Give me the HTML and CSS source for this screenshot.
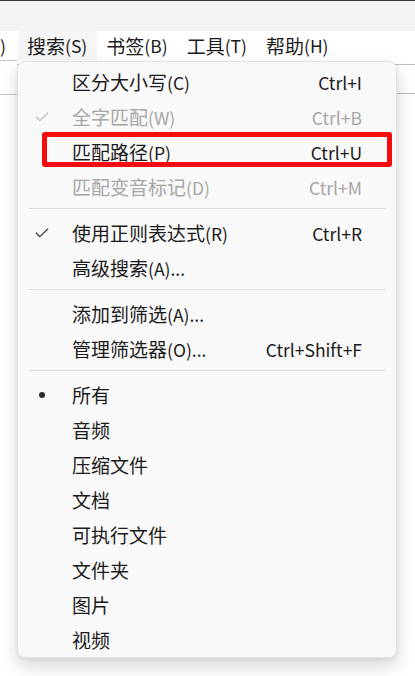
FILE: index.html
```html
<!DOCTYPE html>
<html lang="zh-CN">
<head>
<meta charset="utf-8">
<title>搜索菜单</title>
<link rel="stylesheet" href="styles.css">
</head>
<body>
<div class="window">
  <div class="titlebar"></div>
  <div class="menubar">
    <span class="mb-cut"><span class="k">)</span></span>
    <span class="mb-item active">搜索<span class="k">(S)</span></span>
    <span class="mb-item">书签<span class="k">(B)</span></span>
    <span class="mb-item">工具<span class="k">(T)</span></span>
    <span class="mb-item">帮助<span class="k">(H)</span></span>
  </div>
  <div class="toolbar">
    <div class="tb-left"></div>
    <div class="tb-right"></div>
  </div>
  <div class="content"></div>

  <div class="menu">
    <div class="mi"><span class="ic"></span><span class="lb">区分大小写<span class="k">(C)</span></span><span class="sc">Ctrl+I</span></div>
    <div class="mi disabled"><span class="ic"><svg width="14" height="10" viewBox="0 0 14 10"><path d="M1 4.8 L4.8 8.6 L13 0.8" fill="none" stroke="currentColor" stroke-width="1.3"/></svg></span><span class="lb">全字匹配<span class="k">(W)</span></span><span class="sc">Ctrl+B</span></div>
    <div class="mi"><span class="ic"></span><span class="lb">匹配路径<span class="k">(P)</span></span><span class="sc">Ctrl+U</span></div>
    <div class="mi disabled"><span class="ic"></span><span class="lb">匹配变音标记<span class="k">(D)</span></span><span class="sc">Ctrl+M</span></div>
    <div class="sep"></div>
    <div class="mi"><span class="ic"><svg width="14" height="10" viewBox="0 0 14 10"><path d="M1 4.8 L4.8 8.6 L13 0.8" fill="none" stroke="currentColor" stroke-width="1.3"/></svg></span><span class="lb">使用正则表达式<span class="k">(R)</span></span><span class="sc">Ctrl+R</span></div>
    <div class="mi"><span class="ic"></span><span class="lb">高级搜索<span class="k">(A)...</span></span><span class="sc"></span></div>
    <div class="sep"></div>
    <div class="mi"><span class="ic"></span><span class="lb">添加到筛选<span class="k">(A)...</span></span><span class="sc"></span></div>
    <div class="mi"><span class="ic"></span><span class="lb">管理筛选器<span class="k">(O)...</span></span><span class="sc">Ctrl+Shift+F</span></div>
    <div class="sep"></div>
    <div class="mi"><span class="ic"><span class="dot"></span></span><span class="lb">所有</span><span class="sc"></span></div>
    <div class="mi"><span class="ic"></span><span class="lb">音频</span><span class="sc"></span></div>
    <div class="mi"><span class="ic"></span><span class="lb">压缩文件</span><span class="sc"></span></div>
    <div class="mi"><span class="ic"></span><span class="lb">文档</span><span class="sc"></span></div>
    <div class="mi"><span class="ic"></span><span class="lb">可执行文件</span><span class="sc"></span></div>
    <div class="mi"><span class="ic"></span><span class="lb">文件夹</span><span class="sc"></span></div>
    <div class="mi"><span class="ic"></span><span class="lb">图片</span><span class="sc"></span></div>
    <div class="mi"><span class="ic"></span><span class="lb">视频</span><span class="sc"></span></div>
  </div>

  <div class="highlight-box"></div>
</div>
</body>
</html>
```

FILE: styles.css
```css
html, body {
  margin: 0;
  padding: 0;
  background: #ffffff;
}

body {
  font-family: "Noto Sans CJK SC", "Noto Sans", sans-serif;
  font-size: 19px;
  color: #1b1b1b;
  width: 415px;
  height: 676px;
  overflow: hidden;
}

.k {
  font-size: 17.5px;
}

.window {
  position: relative;
  width: 415px;
  height: 676px;
  display: flex;
  flex-direction: column;
}

.titlebar {
  height: 30px;
  border-top: 1px solid #3a3a3a;
  background: #f3f3f3;
}

.menubar {
  height: 29px;
  display: flex;
  align-items: stretch;
  background: #ffffff;
}

.mb-cut {
  width: 17.5px;
  display: flex;
  align-items: center;
  line-height: 29px;
}

.mb-item {
  display: flex;
  align-items: center;
  padding: 0 9.5px;
  line-height: 29px;
}

.mb-item.active {
  background: #f5f5f5;
}

.toolbar {
  height: 41px;
  display: flex;
}

.tb-left {
  width: 17px;
  border-top: 1px solid #c9c9c9;
  border-bottom: 1px solid #c9c9c9;
  height: 33px;
}

.tb-right {
  flex: 1;
  margin-top: 4px;
  height: 36px;
  border-top: 1px solid #bdbdbd;
  border-bottom: 1px solid #e4e4e4;
  background: linear-gradient(#ffffff 0 28px, #bdbdbd 28px 29px, #ffffff 29px);
}

.content {
  flex: 1;
  background: #ffffff;
}

.menu {
  position: absolute;
  left: 17px;
  top: 61px;
  width: 378px;
  padding: 2px 0 0;
  background: #f9f9f9;
  border: 1px solid #e2e2e2;
  border-radius: 8px;
  box-shadow: 0 8px 18px rgba(0, 0, 0, 0.16), 0 2px 4px rgba(0, 0, 0, 0.05);
  display: flex;
  flex-direction: column;
}

.mi {
  height: 35px;
  display: grid;
  grid-template-columns: 54px 1fr auto;
  align-items: center;
  padding-right: 34px;
  line-height: 35px;
  white-space: nowrap;
}

.mi.disabled {
  color: #a6a6a6;
}

.ic {
  width: 48px;
  height: 35px;
  display: flex;
  align-items: center;
  justify-content: center;
  color: #3c3c3c;
}

.mi.disabled .ic {
  color: #bdbdbd;
}

.dot {
  width: 6px;
  height: 6px;
  border-radius: 50%;
  background: #2a2a2a;
}

.sc {
  text-align: right;
  font-size: 17.5px;
}

.sep {
  height: 1px;
  margin: 4px 11px 6px;
  background: #d9d9d9;
}

.highlight-box {
  position: absolute;
  left: 42px;
  top: 132px;
  width: 340px;
  height: 25px;
  border: 5px solid #f50d0d;
  border-radius: 3px;
}
```
